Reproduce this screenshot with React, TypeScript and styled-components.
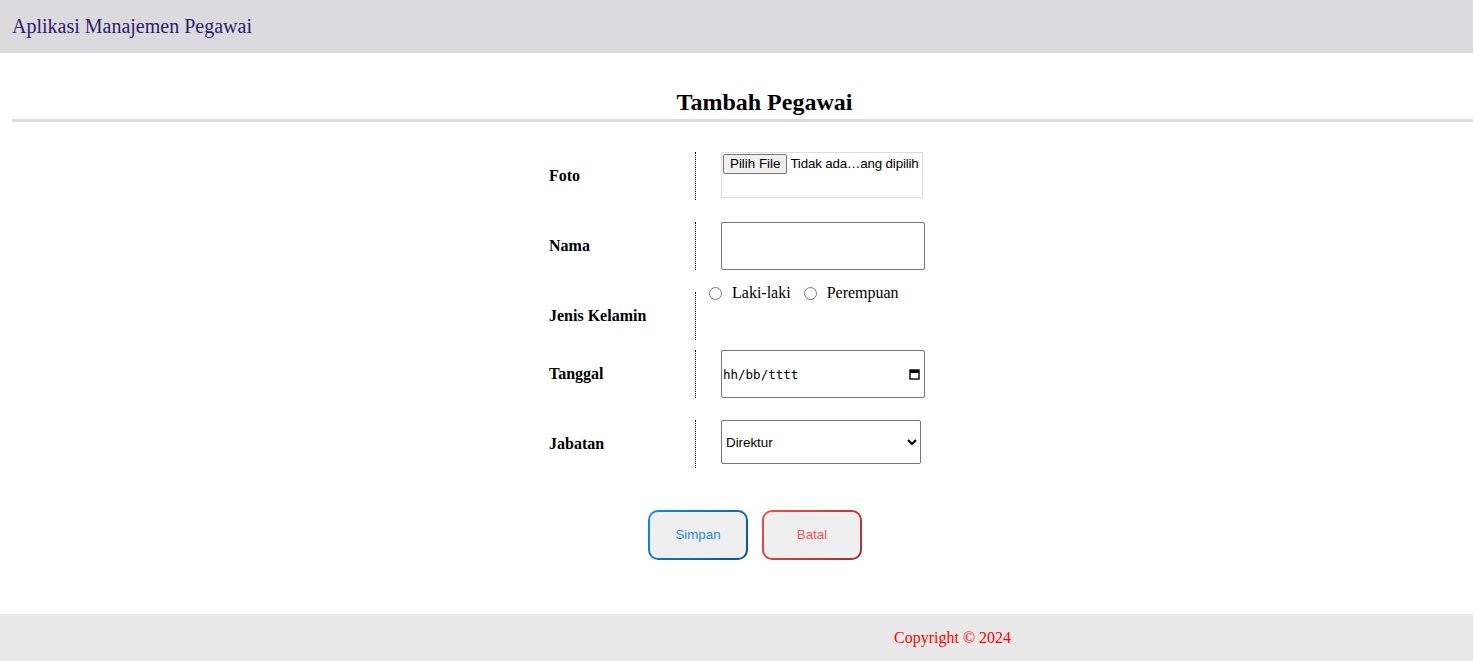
import React from 'react'
import styled, { createGlobalStyle } from 'styled-components'

const GlobalStyle = createGlobalStyle`
  body {
    margin: 0;
    background: #fff;
    font-family: "Liberation Serif", "Times New Roman", serif;
  }
`

const Header = styled.header`
  height: 53px;
  background-color: #dbdadf;
  display: flex;
  align-items: center;
  padding-left: 12px;
  font-size: 20px;
  color: #2b1d6b;
`

const Title = styled.h2`
  margin: 35px 0 0 12px;
  padding: 0 0 3px 44px;
  font-size: 24px;
  line-height: 28px;
  text-align: center;
  border-bottom: 3px solid #dcdcdc;
`

const Form = styled.form`
  width: 391px;
  margin: 30px auto 0;
`

const Row = styled.div<{ gap: number }>`
  display: flex;
  height: 48px;
  margin-bottom: ${({ gap }) => gap}px;
`

const Label = styled.label`
  width: 146px;
  padding-left: 8px;
  display: flex;
  align-items: center;
  font-weight: bold;
  font-size: 16px;
  border-right: 1px dotted #000;
`

const Value = styled.div<{ inset?: number }>`
  flex: 1;
  padding-left: ${({ inset }) => (inset !== undefined ? inset : 25)}px;
  display: flex;
  align-items: flex-start;
`

const FileBox = styled.div`
  box-sizing: border-box;
  width: 202px;
  height: 46px;
  border: 1px solid #dddddd;
  padding: 1px;
  display: flex;
  align-items: flex-start;
  gap: 3px;
  font-family: "Liberation Sans", Arial, sans-serif;
  font-size: 13.33px;
  white-space: nowrap;
  overflow: hidden;
`

const FileButton = styled.span`
  flex-shrink: 0;
  background: #efefef;
  border: 1px solid #767676;
  border-radius: 2px;
  padding: 1px 6px;
  line-height: 16px;
`

const FileText = styled.span`
  line-height: 20px;
  letter-spacing: -0.15px;
`

const TextInput = styled.input`
  box-sizing: border-box;
  width: 204px;
  height: 48px;
  border: 1px solid #767676;
  border-radius: 2px;
  margin: 0;
`

const RadioGroup = styled.div`
  display: flex;
  align-items: center;
  margin-top: -8px;
  font-size: 16px;
`

const Radio = styled.input`
  margin: 0 10px 0 5px;
  width: 13px;
  height: 13px;
`

const RadioText = styled.span`
  margin-right: 8px;
`

const DateBox = styled.div`
  box-sizing: border-box;
  width: 204px;
  height: 48px;
  border: 1px solid #767676;
  border-radius: 2px;
  padding: 0 4px 0 1px;
  display: flex;
  align-items: center;
  justify-content: space-between;
  font-family: "DejaVu Sans Mono", "Liberation Mono", monospace;
  font-size: 12.5px;
`

const Select = styled.select`
  box-sizing: border-box;
  width: 200px;
  height: 44px;
  border: 1px solid #767676;
  border-radius: 2px;
  background: #fff;
  padding-left: 0;
  margin: 0;
  font-family: "Liberation Sans", Arial, sans-serif;
  font-size: 13.33px;
  color: #000;
`

const Buttons = styled.div`
  display: flex;
  justify-content: center;
  gap: 14px;
  padding-left: 37px;
  margin-top: 42px;
`

const ActionButton = styled.button<{ from: string; to: string; text: string }>`
  width: 100px;
  height: 50px;
  border-radius: 10px;
  border: 2px solid transparent;
  background: linear-gradient(#efefef, #efefef) padding-box,
    linear-gradient(135deg, ${({ from }) => from}, ${({ to }) => to}) border-box;
  color: ${({ text }) => text};
  font-family: "Liberation Sans", Arial, sans-serif;
  font-size: 13.33px;
  padding: 0 0 1px;
  cursor: pointer;
`

const Footer = styled.footer`
  margin-top: 54px;
  height: 47px;
  background-color: #e9e9e9;
  display: flex;
  align-items: center;
  padding-left: 894px;
  color: #ff0000;
  font-size: 16px;
`

const CalendarIcon = () => (
  <svg width="11" height="12" viewBox="0 0 11 12">
    <rect x="1" y="2" width="9" height="9" fill="none" stroke="#000" strokeWidth="1.4" />
    <rect x="1" y="2" width="9" height="3" fill="#000" />
  </svg>
)

export default function App() {
  return (
    <>
      <GlobalStyle />
      <Header>Aplikasi Manajemen Pegawai</Header>
      <Title>Tambah Pegawai</Title>
      <Form onSubmit={(e) => e.preventDefault()}>
        <Row gap={22}>
          <Label>Foto</Label>
          <Value>
            <FileBox>
              <FileButton>Pilih File</FileButton>
              <FileText>Tidak ada…ang dipilih</FileText>
            </FileBox>
          </Value>
        </Row>
        <Row gap={22}>
          <Label>Nama</Label>
          <Value>
            <TextInput type="text" />
          </Value>
        </Row>
        <Row gap={10}>
          <Label>Jenis Kelamin</Label>
          <Value inset={8}>
            <RadioGroup>
              <Radio type="radio" name="jk" />
              <RadioText>Laki-laki</RadioText>
              <Radio type="radio" name="jk" />
              <RadioText>Perempuan</RadioText>
            </RadioGroup>
          </Value>
        </Row>
        <Row gap={22}>
          <Label>Tanggal</Label>
          <Value>
            <DateBox>
              <span>hh/bb/tttt</span>
              <CalendarIcon />
            </DateBox>
          </Value>
        </Row>
        <Row gap={0}>
          <Label>Jabatan</Label>
          <Value>
            <Select defaultValue="Direktur">
              <option>Direktur</option>
              <option>Manajer</option>
              <option>Staff</option>
            </Select>
          </Value>
        </Row>
        <Buttons>
          <ActionButton type="submit" from="#0e8fe2" to="#0a5488" text="#2b8ad8">
            Simpan
          </ActionButton>
          <ActionButton type="button" from="#f24a4a" to="#a33030" text="#f25555">
            Batal
          </ActionButton>
        </Buttons>
      </Form>
      <Footer>Copyright © 2024</Footer>
    </>
  )
}
